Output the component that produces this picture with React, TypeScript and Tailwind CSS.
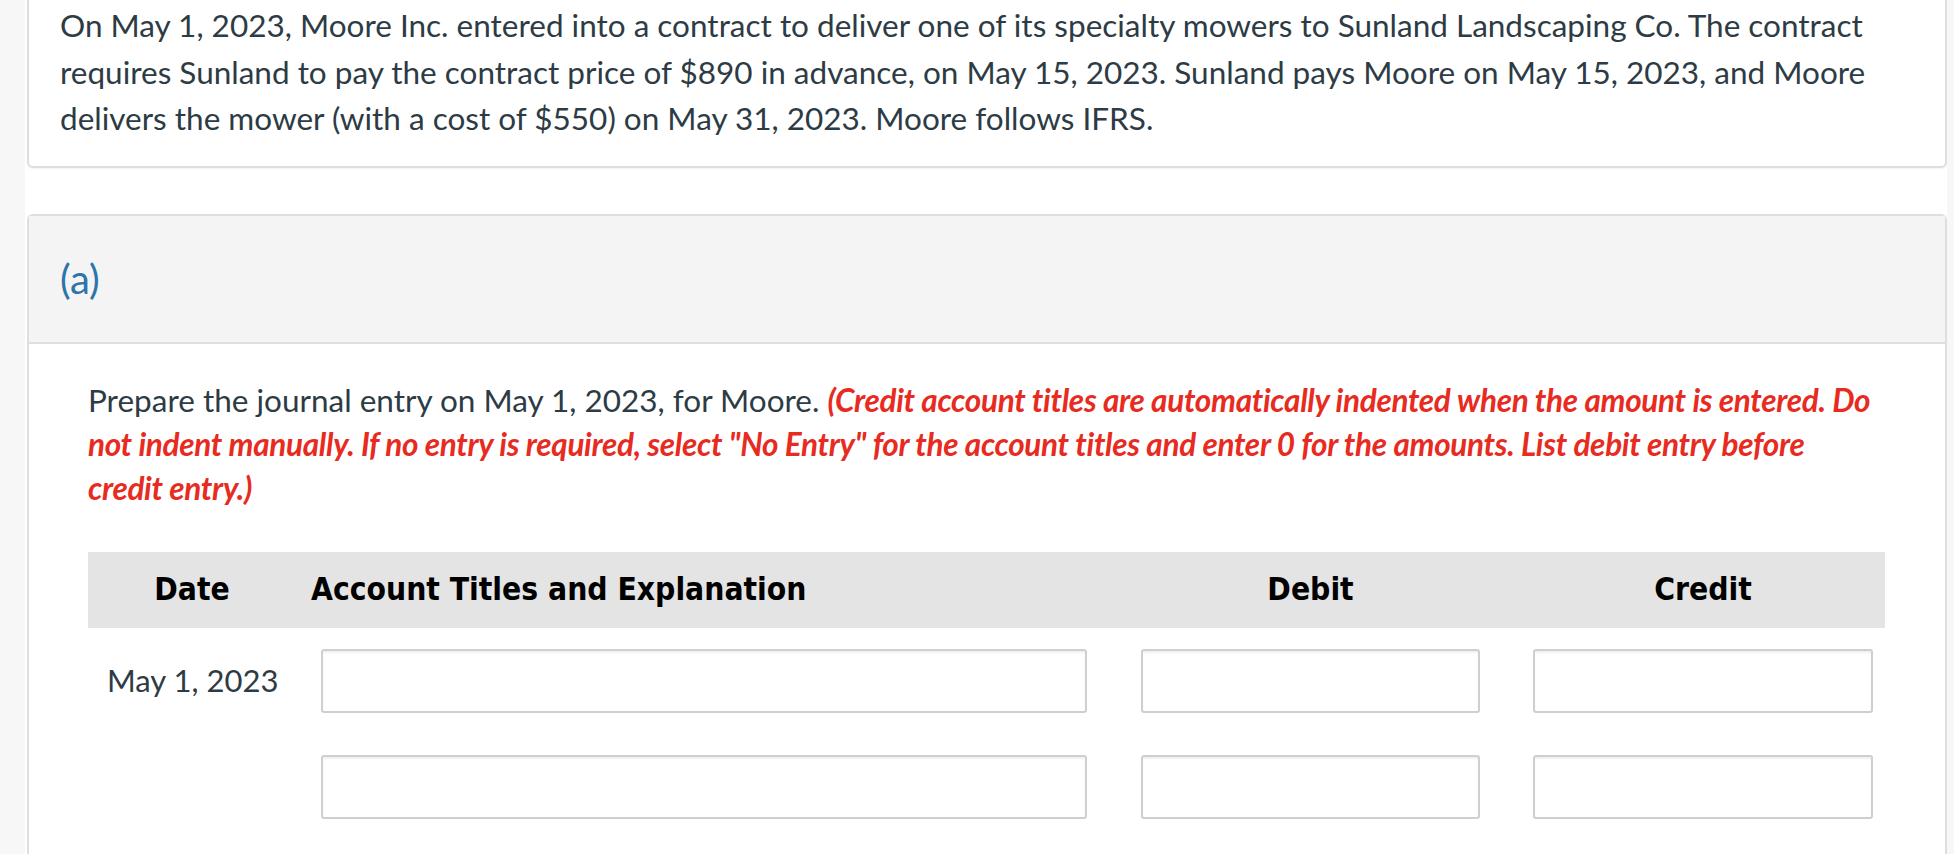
import React from "react";

const columns = "grid-cols-[208px_818px_393px_378px]";

function Field({ width }: { width: string }) {
  return (
    <input
      type="text"
      className={`${width} h-[64px] rounded-[3px] border-2 border-[#cfcfcf] bg-white shadow-[inset_0_2px_2px_rgba(0,0,0,0.06)] outline-none`}
    />
  );
}

function EntryRow({ date }: { date?: string }) {
  return (
    <div className={`grid ${columns} items-center`}>
      <div className="pl-[19px] text-[31px] text-[#2d3b45]">{date}</div>
      <div className="pl-[25px]">
        <Field width="w-[766px]" />
      </div>
      <div className="pl-[27px]">
        <Field width="w-[339px]" />
      </div>
      <div className="pl-[26px]">
        <Field width="w-[340px]" />
      </div>
    </div>
  );
}

export default function App() {
  return (
    <div className="flex h-[854px] w-[1954px] overflow-hidden bg-white font-['Lato','Liberation_Sans',sans-serif] text-[#2d3b45]">
      {/* left edge of the page */}
      <div className="w-[25px] shrink-0 bg-[#f7f7f7]" />

      <div className="flex w-[1922px] shrink-0 flex-col pl-[2px]">
        {/* question stem */}
        <div className="-mt-[14px] rounded-[6px] border-2 border-[#dedede] bg-white pb-[24px] pl-[31px] pr-[40px] pt-[14px] shadow-[0_1px_2px_rgba(0,0,0,0.05)]">
          <p className="text-[31.5px] leading-[46.5px]">
            On May 1, 2023, Moore Inc. entered into a contract to deliver one of its specialty mowers to Sunland Landscaping Co. The contract
            requires Sunland to pay the contract price of $890 in advance, on May 15, 2023. Sunland pays Moore on May 15, 2023, and Moore
            delivers the mower (with a cost of $550) on May 31, 2023. Moore follows IFRS.
          </p>
        </div>

        {/* part (a) */}
        <div className="mt-[46px] flex-1 rounded-t-[6px] border-2 border-b-0 border-[#dedede] bg-white">
          <div className="flex h-[128px] items-center border-b-2 border-[#dedede] bg-[#f4f4f4] pl-[31px]">
            <span className="text-[40px] text-[#2d74ab]">(a)</span>
          </div>

          <div className="pl-[59px] pr-[58px] pt-[34px]">
            <p className="pr-[9px] text-[31.5px] leading-[44px]">
              Prepare the journal entry on May 1, 2023, for Moore.{" "}
              <span className="font-bold italic tracking-[-0.01em] text-[#e72b1f]">
                (Credit account titles are automatically indented when the amount is entered. Do not indent manually. If no entry is required,
                select "No Entry" for the account titles and enter 0 for the amounts. List debit entry before credit entry.)
              </span>
            </p>

            <div className="mt-[42px] w-[1797px]">
              <div className={`grid ${columns} h-[76px] items-center bg-[#e4e4e4] font-['DejaVu_Sans_Condensed','DejaVu_Sans',sans-serif] text-[31.5px] font-bold text-black`}>
                <div className="text-center">Date</div>
                <div className="pl-[15px]">Account Titles and Explanation</div>
                <div className="text-center">Debit</div>
                <div className="pl-[14px] text-center">Credit</div>
              </div>

              <div className="flex flex-col gap-[42px] pt-[21px]">
                <EntryRow date="May 1, 2023" />
                <EntryRow />
              </div>
            </div>
          </div>
        </div>
      </div>

      {/* right edge of the page */}
      <div className="w-[7px] shrink-0 bg-[#f7f7f7]" />
    </div>
  );
}
